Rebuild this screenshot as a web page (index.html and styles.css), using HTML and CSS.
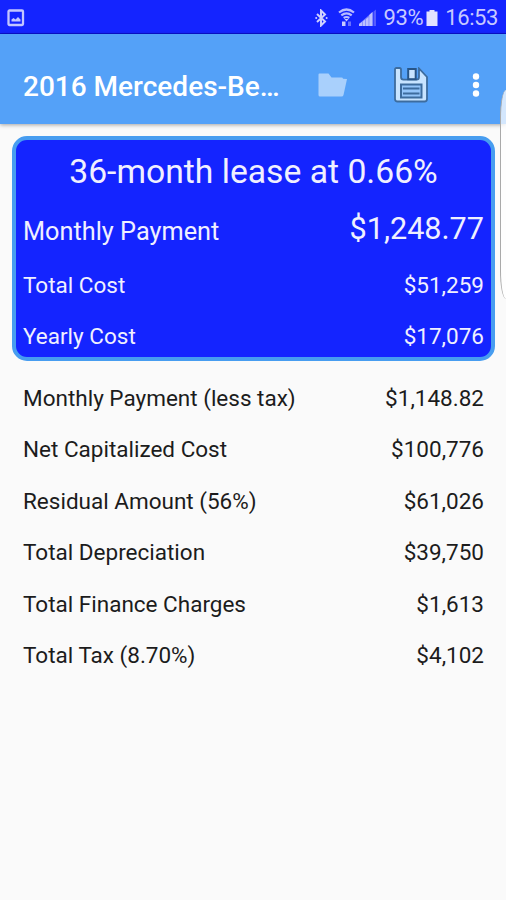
FILE: index.html
```html
<!DOCTYPE html>
<html lang="en">
<head>
    <meta charset="UTF-8">
    <meta name="viewport" content="width=device-width, initial-scale=1.0">
    <title>Lease Calculator</title>
    <link rel="stylesheet" href="styles.css">
</head>
<body>
    <div class="status-bar">
        <svg class="icon-picture" width="18" height="18" viewBox="0 0 18 18">
            <rect x="1.5" y="1.5" width="14.5" height="14.5" rx="1" fill="none" stroke="#c3c6ff" stroke-width="2.3"/>
            <path d="M4.500 12.500V10.500l2-1.500 2 1.500 2.500-2.500 2.500 2.500v2z" fill="#c3c6ff"/>
        </svg>
        <div class="status-right">
            <svg class="icon-bluetooth" width="13" height="18" viewBox="0 0 13 18">
                <path d="M2 5l8 7.500-4 4V1.500l4 4L2 13" fill="none" stroke="#ced0ff" stroke-width="2"/>
                <circle cx="1.200" cy="9" r="1" fill="#ced0ff"/>
                <circle cx="11.600" cy="9" r="1" fill="#ced0ff"/>
            </svg>
            <svg class="icon-wifi" width="17" height="19" viewBox="0 0 17 19">
                <path d="M1 4.500Q8.500-1.500 16 4.500M3.300 7.300q5.200-4 10.400 0M5.700 10q2.800-2 5.600 0" fill="none" stroke="#b9bcff" stroke-width="2.200"/>
                <path d="M6.500 11h4l-2 2.500z" fill="#c9cbff"/>
                <path d="M4 13.500h3.500V18H4z" fill="#c9cbff"/>
                <path d="M10 13.500h3V18h-3z" fill="#6a70ff"/>
            </svg>
            <svg class="icon-signal" width="18" height="18" viewBox="0 0 18 18">
                <path d="M0 17v-2l3-2v4zM3.700 17v-4.500l2.600-2V17zM7 17v-7l2.600-2v9zM10.300 17V6l3.200-3v14z" fill="#c3c6ff"/>
                <path d="M0 17v-2L13.500 3V17z" fill="#b9bcff" opacity=".6"/>
                <path d="M14.500 17V2.500L17 .5V17z" fill="#565cff"/>
            </svg>
            <span class="battery-text">93%</span>
            <svg class="icon-battery" width="12" height="18" viewBox="0 0 12 18">
                <path d="M3.500 1h5v1.500H11.500v14.500H.5V2.500h3z" fill="#e1e2ff"/>
            </svg>
            <span class="clock">16:53</span>
        </div>
    </div>

    <div class="toolbar">
        <h1>2016 Mercedes-Be…</h1>
        <svg class="icon-folder" width="30" height="25" viewBox="0 0 30 25">
            <path d="M1.500 .5h9l3 4h10q1.500 0 1.500 1.200L29 6l-3.500 16q-.4 1.500-2 1.500H2q-1.500 0-1.500-1.500V1.500q0-1 1-1z" fill="#a9d0fc"/>
        </svg>
        <svg class="icon-save" width="34" height="36" viewBox="0 0 34 36">
            <path d="M2.500 1h3q1.500 0 1.500 1.500V10q0 2.700 2.500 2.700h13q2.500 0 2.500-2.700V1.500l8 8.500v22q0 2.500-2.500 2.500h-27Q1 34.500 1 32V2.500Q1 1 2.500 1z" fill="#c8e4ff" stroke="#3d6c9e" stroke-width="1.800"/>
            <rect x="14.200" y="2" width="7.500" height="10.200" fill="#c8e4ff" stroke="#285587" stroke-width="2"/>
            <rect x="7" y="17.500" width="20.500" height="13" fill="#93c5fa" stroke="#3d6c9e" stroke-width="2"/>
            <path d="M9 21.500h16.500M9 26.500h16.500" stroke="#3d6c9e" stroke-width="2.200"/>
        </svg>
        <svg class="icon-more" width="8" height="24" viewBox="0 0 8 24">
            <circle cx="4" cy="3.500" r="3.200" fill="#fff"/>
            <circle cx="4" cy="12" r="3.200" fill="#fff"/>
            <circle cx="4" cy="20.500" r="3.200" fill="#fff"/>
        </svg>
    </div>

    <div class="summary">
        <h2>36-month lease at 0.66%</h2>
        <div class="row main">
            <span class="label">Monthly Payment</span>
            <span class="amount">$1,248.77</span>
        </div>
        <div class="row">
            <span class="label">Total Cost</span>
            <span class="amount">$51,259</span>
        </div>
        <div class="row">
            <span class="label">Yearly Cost</span>
            <span class="amount">$17,076</span>
        </div>
    </div>

    <div class="details">
        <div class="row">
            <span class="label">Monthly Payment (less tax)</span>
            <span class="amount">$1,148.82</span>
        </div>
        <div class="row">
            <span class="label">Net Capitalized Cost</span>
            <span class="amount">$100,776</span>
        </div>
        <div class="row">
            <span class="label">Residual Amount (56%)</span>
            <span class="amount">$61,026</span>
        </div>
        <div class="row">
            <span class="label">Total Depreciation</span>
            <span class="amount">$39,750</span>
        </div>
        <div class="row">
            <span class="label">Total Finance Charges</span>
            <span class="amount">$1,613</span>
        </div>
        <div class="row">
            <span class="label">Total Tax (8.70%)</span>
            <span class="amount">$4,102</span>
        </div>
    </div>

    <!-- edge panel handle, floats over the page -->
    <div class="edge-handle"></div>
</body>
</html>
```
FILE: styles.css
```css
body {
    font-family: Roboto, sans-serif;
    background-color: #fafafa;
    color: #1c1c1c;
    margin: 0;
    height: 900px;
    position: relative;
}

svg {
    display: block;
    flex-shrink: 0;
}

.status-bar {
    display: flex;
    justify-content: space-between;
    align-items: center;
    box-sizing: border-box;
    height: 34px;
    padding: 2px 8px 0 7px;
    background-color: #1424ff;
    border-bottom: 1px solid #0910d2;
    color: #c6c9ff;
    font-size: 22px;
}

.status-right {
    display: flex;
    align-items: center;
}

.icon-wifi {
    margin-left: 10px;
}

.icon-signal {
    margin-left: 4px;
}

.battery-text {
    margin-left: 7px;
    letter-spacing: -0.4px;
}

.icon-battery {
    margin-left: 3px;
}

.clock {
    margin-left: 7px;
    letter-spacing: -0.4px;
}

.toolbar {
    display: flex;
    align-items: center;
    box-sizing: border-box;
    height: 90px;
    padding: 12px 26px 0 23px;
    background-color: #54a1f8;
    box-shadow: 0 1px 4px rgba(0, 0, 0, 0.35);
}

.toolbar h1 {
    flex: 1;
    margin: 0;
    padding-top: 3px;
    color: #fff;
    font-size: 28px;
    font-weight: 500;
    white-space: nowrap;
}

.icon-save {
    margin-left: 46px;
}

.icon-more {
    margin-left: 44px;
}

.row {
    display: flex;
    justify-content: space-between;
    font-size: 22.5px;
}

.summary {
    box-sizing: border-box;
    height: 225px;
    margin: 12px 11px 0 12px;
    padding: 6px 7px 0;
    border: 4px solid #479df0;
    border-radius: 15px;
    background-color: #1424ff;
    color: #f0f0ff;
}

.summary h2 {
    margin: 0 0 15px;
    font-size: 33.7px;
    font-weight: 400;
    line-height: 52px;
    text-align: center;
}

.summary .row {
    margin-bottom: 13.4px;
    line-height: 38px;
}

.summary .main {
    margin-bottom: 15px;
    font-size: 25.3px;
}

.main .amount {
    font-size: 30.6px;
    line-height: 31px;
}

.details {
    padding: 12px 22px 0 23px;
}

.details .row {
    line-height: 51.4px;
}

.edge-handle {
    position: absolute;
    top: 90px;
    right: 0;
    box-sizing: border-box;
    width: 6px;
    height: 209px;
    border: 1px solid #aaa;
    border-width: 0 0 0 1px;
    border-radius: 6px 0 0 6px / 28px 0 0 28px;
    background-color: rgba(255, 255, 255, 0.75);
}
```
